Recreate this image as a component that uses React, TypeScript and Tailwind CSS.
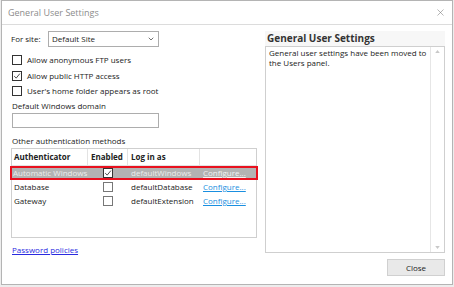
import { ChevronDown, X } from "lucide-react";

const font = { fontFamily: '"Open Sans", "Noto Sans", Arial, sans-serif' };

function Check({ checked, dim }: { checked?: boolean; dim?: boolean }) {
  return (
    <span
      className={`flex h-[10px] w-[10px] shrink-0 items-center justify-center border ${
        dim ? "border-[#777] bg-white" : "border-[#333] bg-white"
      }`}
    >
      {checked && (
        <svg viewBox="0 0 10 10" className="h-[8px] w-[8px]">
          <path d="M1.5 5.2 L4 7.6 L8.6 2" fill="none" stroke="#333" strokeWidth="1.1" />
        </svg>
      )}
    </span>
  );
}

const rows = [
  { name: "Automatic Windows", enabled: true, login: "defaultWindows", selected: true },
  { name: "Database", enabled: false, login: "defaultDatabase", selected: false },
  { name: "Gateway", enabled: false, login: "defaultExtension", selected: false },
];

export default function App() {
  return (
    <div className="h-[287px] w-[454px] bg-[#ededed] text-[8px] text-[#222]" style={font}>
      <div className="ml-[1px] flex h-[285px] w-[452px] flex-col border border-[#b4b4b4] bg-white">
        {/* title bar */}
        <div className="flex h-[24px] shrink-0 items-center justify-between border-b border-[#dcdcdc] pl-[6px] pr-[6px]">
          <span className="text-[9px] text-[#8c8c8c]">General User Settings</span>
          <X size={11} strokeWidth={1.2} className="text-[#777]" />
        </div>

        <div className="flex flex-1 gap-[8px] pl-[9px]">
          {/* left column */}
          <div className="flex w-[246px] flex-col pt-[6px]">
            <div className="flex h-[16px] items-center">
              <span className="w-[37px]">For site:</span>
              <div className="flex h-[16px] w-[111px] items-center justify-between border border-[#adadad] pl-[3px] pr-[3px]">
                <span>Default Site</span>
                <ChevronDown size={8} strokeWidth={2.5} className="text-[#555]" />
              </div>
            </div>

            <div className="mt-[5px] flex h-[16px] items-center gap-[5px] pl-[1px]">
              <Check />
              <span>Allow anonymous FTP users</span>
            </div>
            <div className="flex h-[15px] items-center gap-[5px] pl-[1px]">
              <Check checked />
              <span>Allow public HTTP access</span>
            </div>
            <div className="flex h-[15px] items-center gap-[5px] pl-[1px]">
              <Check />
              <span>User's home folder appears as root</span>
            </div>

            <div className="mt-[1px] flex h-[14px] items-center pl-[1px]">Default Windows domain</div>
            <div className="ml-[1px] h-[15px] w-[147px] border border-[#adadad] bg-white" />

            <div className="mt-[6px] flex h-[14px] items-center pl-[1px]">Other authentication methods</div>

            <div className="flex h-[90px] w-[246px] flex-col border border-[#cfcfcf] bg-white">
              <div className="flex h-[17px] shrink-0 border-b border-[#e3e3e3] font-bold">
                <div className="flex w-[76px] items-center border-r border-[#e3e3e3] pl-[2px]">Authenticator</div>
                <div className="flex w-[40px] items-center border-r border-[#e3e3e3] pl-[3px]">Enabled</div>
                <div className="flex w-[72px] items-center border-r border-[#e3e3e3] pl-[3px]">Log in as</div>
                <div className="flex-1" />
              </div>
              {rows.map((r) => (
                <div
                  key={r.name}
                  className={`flex h-[14px] shrink-0 ${
                    r.selected ? "-mx-[2px] border-2 border-[#e8101e] bg-[#b3b3b3] text-[#ececec]" : ""
                  }`}
                >
                  <div className={`flex w-[76px] items-center ${r.selected ? "pl-[1px]" : "pl-[2px]"}`}>{r.name}</div>
                  <div className="flex w-[40px] items-center justify-center">
                    <Check checked={r.enabled} dim={!r.selected} />
                  </div>
                  <div className="flex w-[72px] items-center pl-[3px]">{r.login}</div>
                  <div className="flex flex-1 items-center pl-[3px]">
                    <span className={`underline ${r.selected ? "text-[#f2f2f2]" : "text-[#1a8fe0]"}`}>Configure...</span>
                  </div>
                </div>
              ))}
            </div>

            <div className="mt-[5px] flex h-[14px] items-center pl-[1px]">
              <span className="text-[#2a2adf] underline">Password policies</span>
            </div>
          </div>

          {/* right column */}
          <div className="flex w-[180px] flex-col pt-[6px]">
            <div className="flex h-[15px] items-center bg-[#f7f7f7] pl-[2px] text-[10px] font-bold text-[#333]">
              General User Settings
            </div>
            <div className="flex h-[207px] border border-[#cfcfcf]">
              <div className="flex-1 pl-[3px] pt-[1px] leading-[10px]">
                General user settings have been moved to
                <br />
                the Users panel.
              </div>
              <div className="flex w-[14px] flex-col items-center justify-between border-l border-[#e6e6e6] py-[3px] text-[#c4c4c4]">
                <svg viewBox="0 0 6 4" className="h-[3px] w-[5px]"><path d="M0 4 L3 0 L6 4Z" fill="#c8c8c8" /></svg>
                <svg viewBox="0 0 6 4" className="h-[3px] w-[5px]"><path d="M0 0 L3 4 L6 0Z" fill="#c8c8c8" /></svg>
              </div>
            </div>
            <div className="mt-[6px] flex justify-end">
              <div className="flex h-[17px] w-[58px] items-center justify-center border border-[#d0d0d0] bg-[#e9e9e9]">
                Close
              </div>
            </div>
          </div>
        </div>
      </div>
    </div>
  );
}
